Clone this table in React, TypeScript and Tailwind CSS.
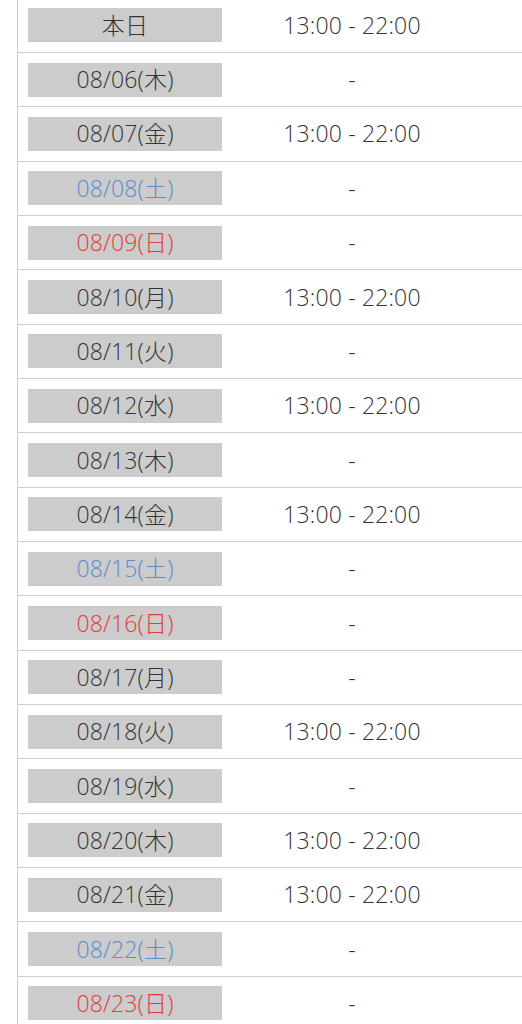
const ROWS: { label: string; time: string; kind?: "sat" | "sun" }[] = [
  { label: "本日", time: "13:00 - 22:00" },
  { label: "08/06(木)", time: "-" },
  { label: "08/07(金)", time: "13:00 - 22:00" },
  { label: "08/08(土)", time: "-", kind: "sat" },
  { label: "08/09(日)", time: "-", kind: "sun" },
  { label: "08/10(月)", time: "13:00 - 22:00" },
  { label: "08/11(火)", time: "-" },
  { label: "08/12(水)", time: "13:00 - 22:00" },
  { label: "08/13(木)", time: "-" },
  { label: "08/14(金)", time: "13:00 - 22:00" },
  { label: "08/15(土)", time: "-", kind: "sat" },
  { label: "08/16(日)", time: "-", kind: "sun" },
  { label: "08/17(月)", time: "-" },
  { label: "08/18(火)", time: "13:00 - 22:00" },
  { label: "08/19(水)", time: "-" },
  { label: "08/20(木)", time: "13:00 - 22:00" },
  { label: "08/21(金)", time: "13:00 - 22:00" },
  { label: "08/22(土)", time: "-", kind: "sat" },
  { label: "08/23(日)", time: "-", kind: "sun" },
];

const labelColor = (kind?: "sat" | "sun") =>
  kind === "sat" ? "text-[#5b8bd0]" : kind === "sun" ? "text-[#e33a3a]" : "text-[#333333]";

export default function App() {
  return (
    <div
      className="h-[1024px] w-[522px] overflow-hidden bg-white font-light tracking-[0.01em]"
      style={{ fontFamily: '"Open Sans", "Noto Sans CJK JP", sans-serif' }}
    >
      <div className="ml-[17px] -mt-[1.4px] border-l border-[#cccccc]">
        {ROWS.map((row) => (
          <div
            key={row.label}
            className="flex h-[54.35px] items-center border-b-[1.5px] border-[#cfcfcf]"
          >
            <div
              className={`ml-[10px] flex h-[34px] w-[194px] items-center justify-center bg-[#cccccc] text-[23px] leading-none ${labelColor(row.kind)}`}
            >
              {row.label}
            </div>
            <div className="w-[260px] text-center text-[23px] leading-none text-[#333333]">
              {row.time}
            </div>
          </div>
        ))}
      </div>
    </div>
  );
}
